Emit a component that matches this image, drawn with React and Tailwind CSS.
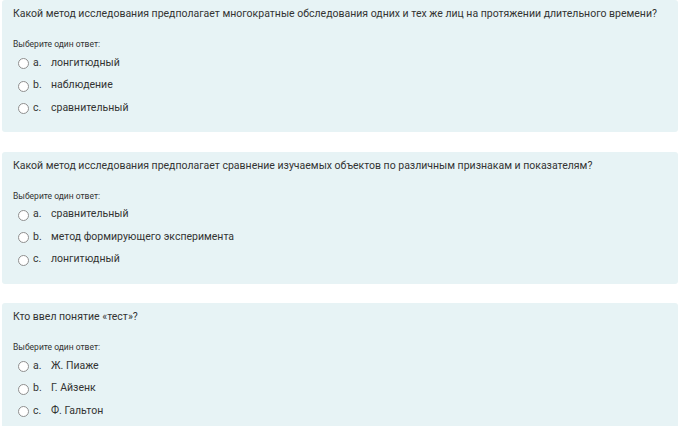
import React from 'react';

const questions = [
  {
    text: 'Какой метод исследования предполагает многократные обследования одних и тех же лиц на протяжении длительного времени?',
    answers: ['лонгитюдный', 'наблюдение', 'сравнительный'],
  },
  {
    text: 'Какой метод исследования предполагает сравнение изучаемых объектов по различным признакам и показателям?',
    answers: ['сравнительный', 'метод формирующего эксперимента', 'лонгитюдный'],
  },
  {
    text: 'Кто ввел понятие «тест»?',
    answers: ['Ж. Пиаже', 'Г. Айзенк', 'Ф. Гальтон'],
  },
];

const letters = ['a.', 'b.', 'c.'];

const App = () => {
  return (
    <div className="min-h-screen bg-white pl-[2px] flex flex-col gap-[19.5px] text-[#333]" style={{ fontFamily: 'Roboto, "Liberation Sans", sans-serif' }}>
      {questions.map((q, i) => (
        <div key={i} className="bg-[#e7f3f5] rounded-[3px] pl-[11px] pt-[6px] h-[132px] shrink-0">
          <p className="text-[10.5px] leading-[15px] whitespace-nowrap">{q.text}</p>
          <p className="text-[8.5px] leading-[10px] mt-[18px]">Выберите один ответ:</p>
          <div className="mt-[2.5px] flex flex-col">
            {q.answers.map((a, j) => (
              <label key={j} className="flex items-center h-[22.5px] text-[10.5px]">
                <span className="ml-[5px] mt-[2px] w-[11px] h-[11px] rounded-full border border-[#8f8f8f] bg-white shrink-0" />
                <span className="ml-[4px] w-[18px]">{letters[j]}</span>
                <span>{a}</span>
              </label>
            ))}
          </div>
        </div>
      ))}
    </div>
  );
};

export default App;
